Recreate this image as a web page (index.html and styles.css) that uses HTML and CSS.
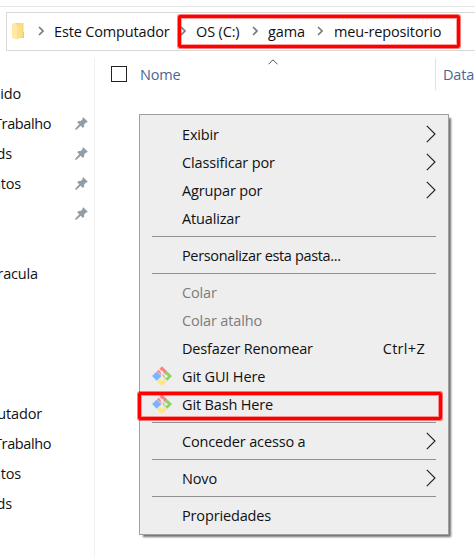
FILE: index.html
```html
<!DOCTYPE html>
<html lang="pt-BR">
<head>
<meta charset="utf-8">
<title>meu-repositorio</title>
<link rel="stylesheet" href="styles.css">
</head>
<body>
<svg class="defs" width="0" height="0">
  <symbol id="pin" viewBox="0 0 13 13"><path d="M8.3 0.2l4.500 4.500-.9.9-.8-.2-2 2 .1 2.200-1.300 1.300-2.200-2.200L1.500 12.700H.3v-1.200l4-4.200L2.200 5.200l1.300-1.300 2.200.100 2-2-.3-.8z"/></symbol>
  <symbol id="arrow" viewBox="0 0 10 18"><path d="M.8.800 9 9 .8 17.200"/></symbol>
  <symbol id="crumb" viewBox="0 0 6 10"><path d="M1 1l4 4-4 4"/></symbol>
  <symbol id="git" viewBox="0 0 20 20">
    <path fill="#ff8080" d="M10 .3 15.200 5.500 10.500 10 5 5.200z"/>
    <path fill="#80b3ff" d="M4.700 5.500 9.600 10 4.700 14.700 0 10z"/>
    <path fill="#8dd35f" d="M15.300 5.500 20 10l-4.700 4.700L10.600 10z"/>
    <path fill="#ffe680" d="M10 10.600l5 4.600-5 4.700-5-4.700z"/>
    <path fill="none" stroke="#eee" stroke-width="1.300" d="M7 3.200l3 3v8M10 6.200l4 4"/>
    <circle cx="10" cy="6.500" r="1.400" fill="#eee"/><circle cx="14" cy="10.300" r="1.500" fill="#eee"/><circle cx="10" cy="13.500" r="1.400" fill="#eee"/>
  </symbol>
</svg>
<div class="window">
  <header class="toolbar">
    <nav class="address">
      <svg class="folder" viewBox="0 0 13 17"><path fill="#f8d775" d="M3 0h8.500v15H3z"/><path fill="#ffe9a6" d="M0 .5h3l2 1.500v14.500L0 15z"/><path fill="#fcdf8a" d="M5 2l5-2v14l-5 2.500z"/><path fill="#f3cd6c" d="M11 9h1v6h-1z"/></svg>
      <svg class="crumb"><use href="#crumb"/></svg><span class="path p1">Este Computador</span>
      <svg class="crumb"><use href="#crumb"/></svg><span class="path p2">OS (C:)</span>
      <svg class="crumb"><use href="#crumb"/></svg><span class="path p3">gama</span>
      <svg class="crumb"><use href="#crumb"/></svg><span class="path p4">meu-repositorio</span>
      <div class="mark mark-path"></div>
    </nav>
  </header>
  <div class="body">
    <aside class="sidebar">
      <div class="place"><span class="w21">pido</span></div>
      <div class="place"><span class="w51">Trabalho</span><svg class="pin"><use href="#pin"/></svg></div>
      <div class="place"><span class="w12">ads</span><svg class="pin"><use href="#pin"/></svg></div>
      <div class="place"><span class="w21">entos</span><svg class="pin"><use href="#pin"/></svg></div>
      <div class="place"><svg class="pin"><use href="#pin"/></svg></div>
      <div class="place gap-a"><span class="w38">racula</span></div>
      <div class="place gap-b"><span class="w42">putador</span></div>
      <div class="place"><span class="w51">Trabalho</span></div>
      <div class="place"><span class="w21">entos</span></div>
      <div class="place"><span class="w12">ads</span></div>
    </aside>
    <main class="files">
      <div class="columns">
        <span class="check"></span><span class="name">Nome</span>
        <svg class="sort" viewBox="0 0 10 6"><path d="M.5 5.300 5 .8l4.500 4.500"/></svg>
        <span class="date">Data</span>
      </div>
    </main>
  </div>
</div>
<div class="menu">
  <div class="item"><span>Exibir</span><svg class="arrow"><use href="#arrow"/></svg></div>
  <div class="item"><span>Classificar por</span><svg class="arrow"><use href="#arrow"/></svg></div>
  <div class="item"><span>Agrupar por</span><svg class="arrow"><use href="#arrow"/></svg></div>
  <div class="item"><span>Atualizar</span></div>
  <hr>
  <div class="item"><span class="tight">Personalizar esta pasta...</span></div>
  <hr>
  <div class="item off"><span>Colar</span></div>
  <div class="item off"><span>Colar atalho</span></div>
  <div class="item"><span>Desfazer Renomear</span><span class="key">Ctrl+Z</span></div>
  <div class="item"><svg class="git"><use href="#git"/></svg><span>Git GUI Here</span></div>
  <div class="item"><svg class="git"><use href="#git"/></svg><span>Git Bash Here</span><div class="mark mark-git"></div></div>
  <hr>
  <div class="item"><span>Conceder acesso a</span><svg class="arrow"><use href="#arrow"/></svg></div>
  <hr>
  <div class="item"><span>Novo</span><svg class="arrow"><use href="#arrow"/></svg></div>
  <hr>
  <div class="item"><span>Propriedades</span></div>
</div>
</body>
</html>
```
FILE: styles.css
```css
* { box-sizing: border-box; }
body { margin: 0; width: 475px; height: 557px; overflow: hidden; background: #fff; color: #111; font: 14.5px/28px "Open Sans", "Noto Sans", sans-serif; letter-spacing: -0.15px; }
.defs { position: absolute; }
svg { display: block; flex: none; }
span { white-space: nowrap; }
.window { display: flex; flex-direction: column; height: 557px; }
.toolbar { margin-top: 6px; height: 45px; border-top: 1px solid #e8e8e8; padding: 5px 0 0 6px; }
.address { position: relative; display: flex; align-items: center; height: 39px; border: 1px solid #d9d9d9; border-right: 0; padding-left: 5px; }
.folder { width: 13px; height: 17px; margin-right: 13px; }
.crumb { width: 6px; height: 10px; margin-top: -2px; fill: none; stroke: #7a7a7a; stroke-width: 1.6; }
.path { margin-top: 1px; }
.p1 { width: 115px; margin-left: 10px; margin-right: 11px; }
.p2 { width: 45px; margin-left: 10px; margin-right: 11px; }
.p3 { width: 38px; margin-left: 10px; margin-right: 11px; }
.p4 { margin-left: 11px; }
.mark { position: absolute; border: 3px solid #f00; border-radius: 2px; box-shadow: 0 0 0 1px #ff000080, inset 0 0 0 1px #ff000060; }
.mark-path { left: 171px; top: 2px; width: 282px; height: 33px; }
.body { display: flex; flex: 1; }
.sidebar { flex: 0 0 94px; padding-top: 27px; overflow: hidden; }
.place { display: flex; align-items: center; height: 30px; }
.place span { display: flex; justify-content: flex-end; padding-top: 2px; }
.w12 { width: 12px; }
.w21 { width: 21px; }
.w38 { width: 38px; }
.w42 { width: 42px; }
.w51 { width: 51px; letter-spacing: -0.4px; }
.pin { width: 13px; height: 13px; margin: 0 6px 0 auto; fill: #929da5; }
.gap-a { margin-top: 30px; }
.gap-b { margin-top: 110px; }
.files { flex: 1; margin-top: 7px; border-left: 1px solid #f0f0f0; }
.columns { display: flex; height: 32px; color: #4a6690; }
.check { flex: none; width: 16px; height: 16px; border: 1px solid #222; margin: 8px 13px 0 16px; }
.name { flex: none; width: 128px; margin-top: 3px; }
.sort { width: 10px; height: 6px; margin-top: 1px; fill: none; stroke: #555; }
.date { margin-left: 157px; border-left: 1px solid #e2e2e2; padding: 3px 0 0 7px; }
.menu { position: absolute; left: 139px; top: 114px; width: 310px; height: 421px; padding: 5px 12px; background: #eee; border: 1px solid #a0a0a0; box-shadow: 3px 3px 2px -1px #00000090; }
.item { position: relative; display: flex; align-items: center; height: 28px; padding-left: 30px; }
.item span { padding-top: 2px; }
.tight { letter-spacing: -0.35px; }
.menu hr { height: 1px; margin: 4px 0; border: 0; background: #919191; }
.off { color: #7c7c7c; }
.arrow { width: 10px; height: 18px; margin: -1px 0 0 auto; fill: none; stroke: #182430; stroke-width: 1.15; }
.key { position: absolute; right: 11px; letter-spacing: 0.3px; }
.git { width: 20px; height: 20px; margin: -1px 10px 0 -30px; }
.mark-git { left: -14px; top: 2px; width: 304px; height: 28px; }
```
